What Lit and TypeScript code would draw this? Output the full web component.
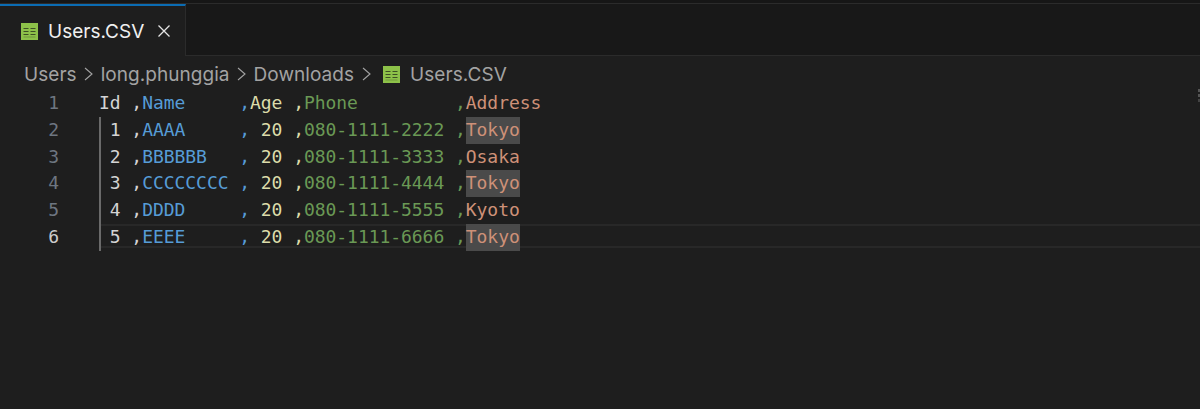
import { LitElement, html, css } from "lit";
import { customElement } from "lit/decorators.js";

const rows: string[][] = [
  ["Id ,", "Name     ,", "Age ,", "Phone         ,", "Address"],
  [" 1 ,", "AAAA     ,", " 20 ,", "080-1111-2222 ,", "Tokyo"],
  [" 2 ,", "BBBBBB   ,", " 20 ,", "080-1111-3333 ,", "Osaka"],
  [" 3 ,", "CCCCCCCC ,", " 20 ,", "080-1111-4444 ,", "Tokyo"],
  [" 4 ,", "DDDD     ,", " 20 ,", "080-1111-5555 ,", "Kyoto"],
  [" 5 ,", "EEEE     ,", " 20 ,", "080-1111-6666 ,", "Tokyo"],
];

const csvIcon = html`<svg class="icon" viewBox="0 0 17 17" aria-hidden="true">
  <rect width="17" height="17" fill="#8dc149"/>
  <path stroke="#3d4f24" stroke-width="1.1" fill="none" d="M2.5 5.5h5M9.5 5.5h5M2.5 8.5h5M9.5 8.5h5M2.5 11.5h5M9.5 11.5h5"/>
  <path stroke="#6b8f3a" stroke-width="0.8" fill="none" d="M2.5 14h12"/>
</svg>`;

@customElement("app-root")
export class AppRoot extends LitElement {
  static styles = css`
    :host {
      display: flex;
      flex-direction: column;
      width: 1200px;
      height: 409px;
      overflow: hidden;
      background: #1e1e1e;
      font-family: "Inter", "Liberation Sans", sans-serif;
      position: relative;
    }
    .titlebar {
      height: 3px;
      background: #161616;
      border-bottom: 1px solid #2b2b2b;
    }
    .tabs {
      display: flex;
      height: 51px;
      background: #181818;
      border-bottom: 1px solid #2b2b2b;
    }
    .tab {
      display: flex;
      align-items: center;
      width: 186px;
      box-sizing: border-box;
      padding: 0 14px 0 21px;
      background: #1e1e1e;
      border-top: 2px solid #0b6cb3;
      border-right: 1px solid #2b2b2b;
      margin-bottom: -1px;
      color: #f0f0f0;
      font-size: 19px;
    }
    .icon {
      width: 17px;
      height: 17px;
      flex: none;
    }
    .tab .name {
      margin-left: 10px;
    }
    .close {
      width: 14px;
      height: 14px;
      margin-left: 13px;
      flex: none;
    }
    .close path {
      stroke: #e4e4e4;
      stroke-width: 1.3;
      fill: none;
    }
    .crumbs {
      display: flex;
      align-items: center;
      height: 34px;
      box-sizing: border-box;
      padding: 2px 0 0 24px;
      color: #a3a3a3;
      font-size: 19px;
      letter-spacing: 0.05px;
    }
    .chev {
      width: 9px;
      height: 16px;
      margin: 0 7.5px;
      flex: none;
    }
    .chev path {
      stroke: #a3a3a3;
      stroke-width: 1.1;
      fill: none;
    }
    .crumbs .icon {
      margin: 0 10px 0 5px;
    }
    .editor {
      flex: 1;
      font-family: "DejaVu Sans Mono", "Liberation Mono", monospace;
      font-size: 18px;
      line-height: 26.75px;
      letter-spacing: -0.05px;
    }
    .line {
      display: flex;
      height: 26.75px;
    }
    .num {
      width: 59px;
      flex: none;
      text-align: right;
      color: #6e7681;
    }
    .line.current .num {
      color: #cccccc;
    }
    .code {
      flex: 1;
      margin-left: 40px;
      white-space: pre;
      position: relative;
    }
    .line.current .code::before {
      content: "";
      position: absolute;
      inset: 0 0 3px 1px;
      border-top: 2px solid #282828;
      border-bottom: 2px solid #282828;
    }
    .guide {
      position: absolute;
      left: 0;
      top: 0;
      bottom: 0;
      width: 1.5px;
      background: #6a6a6a;
    }
    .c0 { color: #d4d4d4; }
    .c1 { color: #569cd6; }
    .c2 { color: #dcdcaa; }
    .c3 { color: #6a9955; }
    .c4 { color: #ce9178; }
    .hl { background: #4a4a4a; display: inline-block; height: 26.75px; position: relative; }
    .ruler {
      position: absolute;
      right: 0;
      top: 89px;
      width: 2px;
      height: 3px;
      background: #555555;
      box-shadow: 0 5px 0 #555555, 0 10px 0 #444444;
    }
  `;

  render() {
    return html`
      <div class="titlebar"></div>
      <div class="tabs">
        <div class="tab">
          ${csvIcon}
          <span class="name">Users.CSV</span>
          <svg class="close" viewBox="0 0 14 14" aria-hidden="true"><path d="M1.5 1.5l11 11M12.5 1.5l-11 11"/></svg>
        </div>
      </div>
      <div class="crumbs">
        <span>Users</span>${this.chev()}
        <span>long.phunggia</span>${this.chev()}
        <span>Downloads</span>${this.chev()}
        ${csvIcon}
        <span>Users.CSV</span>
      </div>
      <div class="editor">
        ${rows.map(
          (r, i) => html`<div class="line ${i === 5 ? "current" : ""}">
            <div class="num">${i + 1}</div>
            <div class="code">${i > 0 ? html`<span class="guide"></span>` : ""}${r.map(
              (c, j) =>
                html`<span class="c${j} ${j === 4 && c === "Tokyo" ? "hl" : ""}">${c}</span>`
            )}</div>
          </div>`
        )}
      </div>
      <div class="ruler"></div>
    `;
  }

  chev() {
    return html`<svg class="chev" viewBox="0 0 9 16" aria-hidden="true"><path d="M1 2l7 6-7 6"/></svg>`;
  }
}
